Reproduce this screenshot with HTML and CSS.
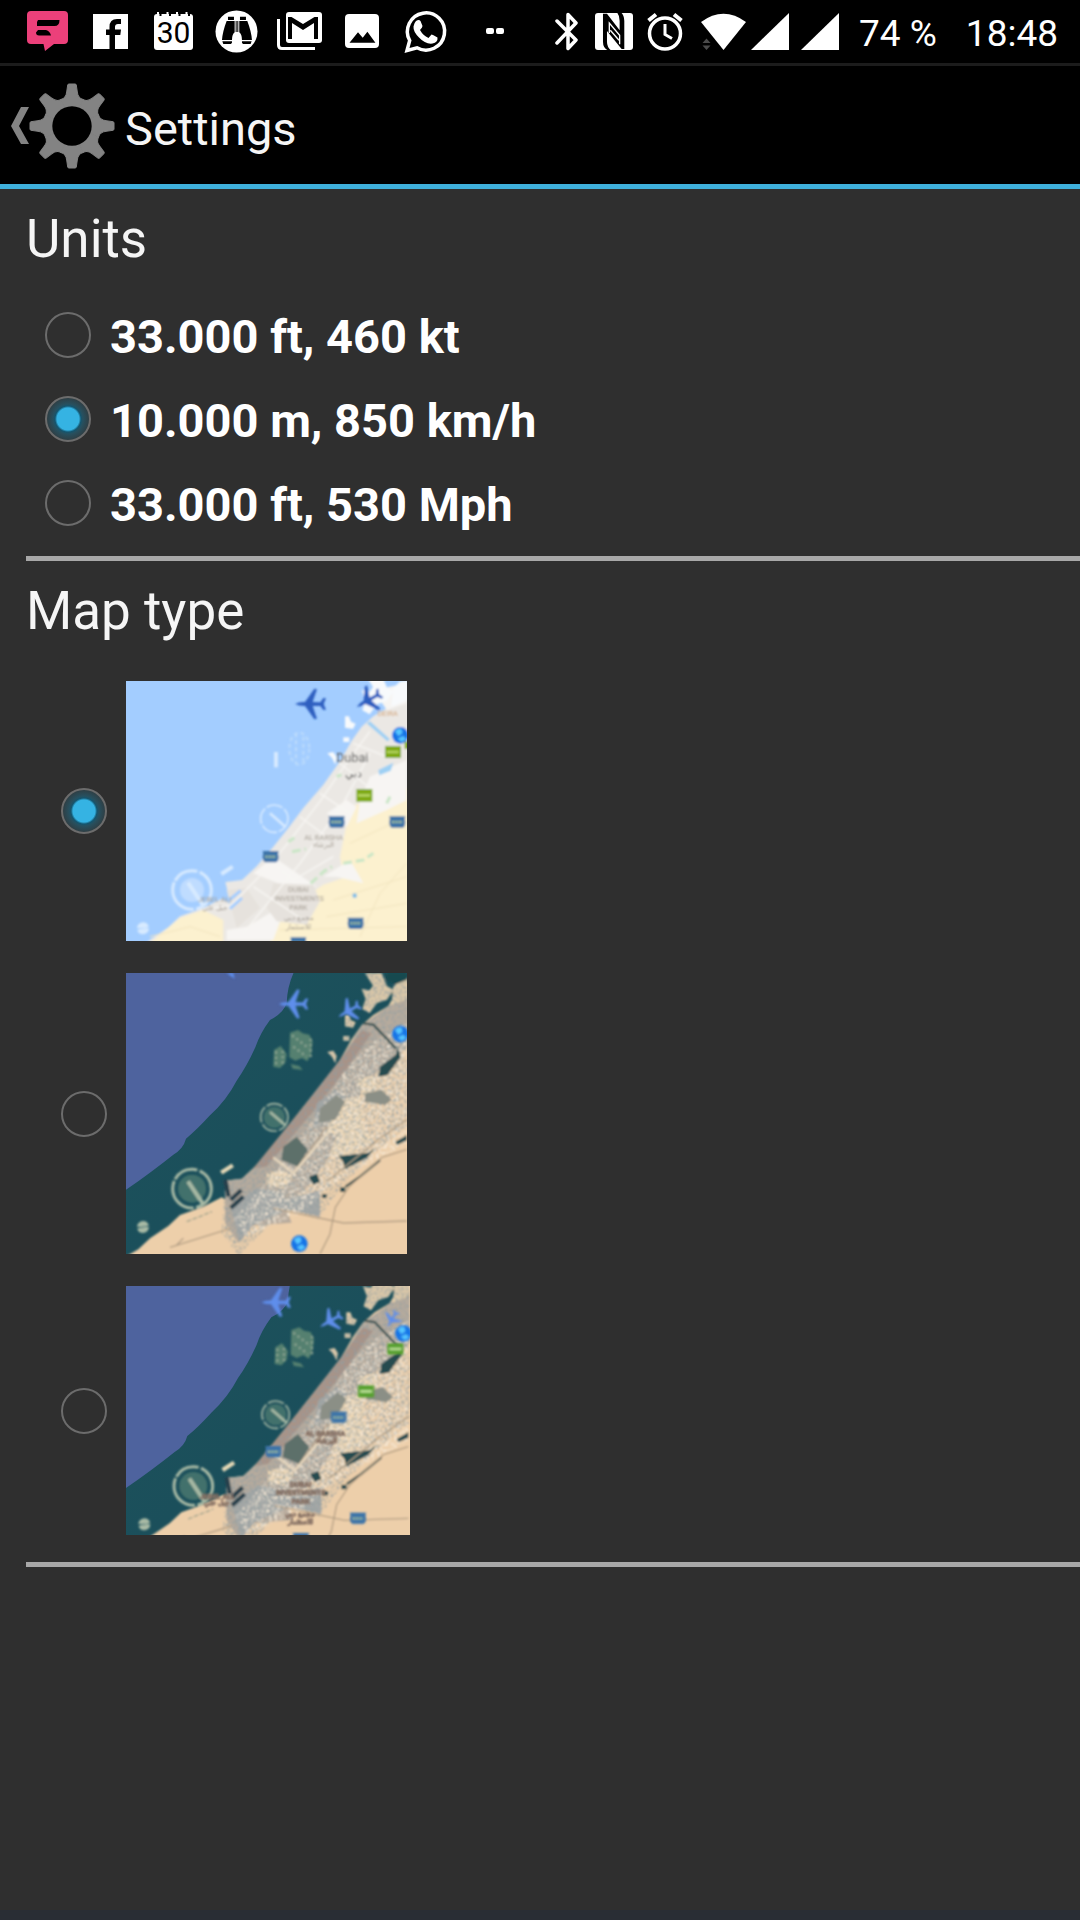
FILE: index.html
```html
<!DOCTYPE html>
<html lang="en">

<head>
  <meta charset="UTF-8">
  <meta name="viewport" content="width=device-width, initial-scale=1.0">
  <title>Settings</title>
  <link rel="stylesheet" href="styles.css">
</head>

<body>
  <div class="status-bar">
    <div class="notifications">
      <svg class="icon" width="48" height="48" viewBox="0 0 48 48">
        <path fill="#ec407a" d="M7 3h33q4 0 4 4v25q0 4-4 4H30l-9 7-1.500-7H7q-4 0-4-4V7q0-4 4-4z" />
        <path d="M14 12h21.500q0 6-5 6H13v-4zM14 22h8q4 1 5 5.500H15q-3 0-3-3z" />
      </svg>
      <svg class="icon" width="48" height="48" viewBox="0 0 48 48">
        <path fill="#fff" d="M6 6h35v35H6z" />
        <path d="M22.500 41V27H19v-5.500h3.500V19q0-8 7.500-8h4v5h-3q-3 0-3 3v2.500h6l-.700 5.500H28v14z" />
      </svg>
      <svg class="icon" width="48" height="48" viewBox="0 0 48 48">
        <rect x="4" y="6" width="39" height="36" rx="3" fill="#fff" />
        <path stroke="#fff" stroke-width="2" d="M8 4v4M17.500 4v4M27 4v4M36.500 4v4" />
        <path stroke="#000" stroke-width="2" d="M10.500 4v4M20 4v4M29.500 4v4M39 4v4" />
        <text class="day" x="23.500" y="35" text-anchor="middle">30</text>
      </svg>
      <svg class="icon" width="48" height="48" viewBox="0 0 48 48">
        <circle cx="23.500" cy="23.500" r="21" fill="#fff" />
        <path transform="translate(-3 -3) scale(.333)" d="M54 35h18v10H54zM90 35h18v10H90zM50 48h24v34q-8 6-8 23H36q2-26 14-57zM88 48h24q12 31 14 57H96q0-17-8-23zM37 109h29v4l-3 4H40zM96 109h29l-3 8H99l-3-4zM77 48h3v33h-3zM82 48h3v33h-3z" />
      </svg>
      <svg class="icon" width="48" height="48" viewBox="0 0 48 48">
        <path fill="none" stroke="#fff" stroke-width="3" d="M2.500 11v26q0 3.500 3.500 3.500h33" />
        <rect x="10" y="4" width="36" height="31" rx="3" fill="#fff" />
        <path d="M12 31V9h3.500L27 16l11.500-7H42v22h-4V15L27 22l-11-7v16z" />
      </svg>
      <svg class="icon" width="48" height="48" viewBox="0 0 48 48">
        <rect x="6" y="6" width="34" height="34" rx="4" fill="#fff" />
        <path d="M10.500 34.700L19 24.300l4.700 5.400 4.700-6 8 11z" />
      </svg>
      <svg class="icon" width="48" height="48" viewBox="0 0 48 48">
        <path fill="none" stroke="#fff" stroke-width="3.500" d="M5 42.500l2.700-10A18.600 18.600 0 1 1 15 39.800z" />
        <path fill="#fff" d="M14 13q3-2 4.500 0l2 5q0 1.500-2.500 4 3 5.500 8.500 8l3-3.500q1 0 6 3 .5 5-5 6-7 1-13.500-6-6-6-5.500-11 .5-3.500 2.500-5.500z" />
      </svg>
      <svg class="icon" width="48" height="48" viewBox="0 0 48 48">
        <path fill="#fff" d="M23 20h4q2 0 2 2v2q0 2-2 2h-4q-2 0-2-2v-2q0-2 2-2zM33 20h4q2 0 2 2v2q0 2-2 2h-4q-2 0-2-2v-2q0-2 2-2z" />
      </svg>
    </div>
    <div class="system">
      <svg class="icon" width="40" height="48" viewBox="0 0 40 48">
        <path fill="none" stroke="#fff" stroke-width="3.500" stroke-linejoin="round" stroke-linecap="round" d="M2 13l19 19-8 8.500V6.500l8 8.500L2 35" />
      </svg>
      <svg class="icon" width="52" height="48" viewBox="0 0 52 48">
        <rect y="5" width="38" height="37" rx="3" fill="#fff" />
        <g transform="translate(-4 -3) scale(.333)">
          <path d="M36 26h12l38 50V48q0-16-8-26h12q10 10 10 26v84h-8L48 78v32q0 16 12 26H50q-14-8-14-26z" />
          <path fill="none" stroke="#fff" stroke-width="4" d="M55 84V54l31 37v27" />
          <path stroke="#fff" stroke-width="4" d="M58 76l26 30" />
        </g>
      </svg>
      <svg class="icon" width="54" height="48" viewBox="0 0 54 48">
        <g fill="none" stroke="#fff">
          <circle cx="18" cy="25.500" r="15.500" stroke-width="3.500" />
          <path stroke-width="3" d="M18 16v10.500l7 4" />
          <path stroke-width="4" d="M1.500 12.500L9 6.500M27 6.500l7.500 6" />
        </g>
      </svg>
      <svg class="icon" width="50" height="48" viewBox="0 0 50 48">
        <path fill="#fff" d="M0 14Q22.500-2.500 45 14L22.500 42z" />
        <path fill="#4a4a4a" d="M1.500 35l4-4.500 4 4.500zM1.500 37.500h8l-4 4.500z" />
      </svg>
      <svg class="icon" width="50" height="48" viewBox="0 0 50 48">
        <path fill="#fff" d="M38 5v37H0z" />
      </svg>
      <svg class="icon" width="50" height="48" viewBox="0 0 50 48">
        <path fill="#fff" d="M38 5v37H0z" />
      </svg>
      <span class="battery">74 %</span>
      <span class="clock">18:48</span>
    </div>
  </div>

  <header class="action-bar">
    <a class="back" href="#" aria-label="Back">
      <svg width="18" height="38" viewBox="0 0 18 38">
        <path fill="#838383" d="M10 0h8L8 19l10 18h-8L0 19z" />
      </svg>
      <svg width="86" height="86" viewBox="-43 -43 86 86">
        <defs>
          <path id="tooth" d="M0 0L-11-26.500Q-6-28-5.300-34L-4.300-41q.2-1 1.300-1h6q1.100 0 1.300 1L5.300-34Q6-28 11-26.500z" />
        </defs>
        <g fill="#838383" stroke="#838383">
          <use href="#tooth" />
          <use href="#tooth" transform="rotate(45)" />
          <use href="#tooth" transform="rotate(90)" />
          <use href="#tooth" transform="rotate(135)" />
          <use href="#tooth" transform="rotate(180)" />
          <use href="#tooth" transform="rotate(225)" />
          <use href="#tooth" transform="rotate(270)" />
          <use href="#tooth" transform="rotate(315)" />
        </g>
        <circle r="19.700" />
      </svg>
    </a>
    <h1>Settings</h1>
  </header>

  <main class="settings">
    <section class="section">
      <h2>Units</h2>
      <div class="units">
        <label class="option"><input type="radio" name="units"><span>33.000 ft, 460 kt</span></label>
        <label class="option"><input type="radio" name="units" checked><span>10.000 m, 850 km/h</span></label>
        <label class="option"><input type="radio" name="units"><span>33.000 ft, 530 Mph</span></label>
      </div>
    </section>

    <section class="section">
      <h2>Map type</h2>
      <div class="maps">
        <label class="map-option">
          <input type="radio" name="map" aria-label="Normal" checked>
          <!-- road map -->
          <svg width="281" height="260" viewBox="258 33 843 780">
            <defs>
              <filter id="soft" x="-5%" y="-5%" width="110%" height="110%">
                <feGaussianBlur stdDeviation="2.500" />
              </filter>
              <path id="coast" d="M240 900L295 868 330 835 385 798 420 765 490 740 545 712 572 728 556 662 606 656 650 615 700 556 745 500 790 440 850 370 900 300 935 238 965 196 1000 165 1045 138 1075 85 1120 60V900z" />
              <path id="islands" d="M975 39h50l16 40 20 10-20 30-30 10-22 30-22-12 10-30-12-30 24 4 10-14zM915 165l12 0 6 16 14 6-8 16-24-4zM910 228h18v14h-18zM862 276l18-4 10 16-4 22-10-20zM1060 80l20-20 24-4v60l-50 20z" />
              <g id="palms">
                <circle cx="456" cy="686" r="58" fill="none" stroke-width="9" stroke-dasharray="78 7 120 5" />
                <path fill="none" stroke-width="12" d="M444 664l44 66M544 638l34-22" />
                <circle cx="703" cy="472" r="41" fill="none" stroke-width="5" stroke-dasharray="50 6" />
                <path fill="none" stroke-width="8" d="M690 456l46 40" />
                <circle cx="309" cy="801" r="10" fill="none" stroke-width="16" stroke-dasharray="28 3" />
              </g>
              <path id="plane" d="M-46 0q12-7 30-6L12-46 20-44 7-6 30-5 39-18 47-17 40 0 47 17 39 18 30 6 7 6 20 44 12 46-16 6Q-34 6-46 0z" />
              <g id="globe">
                <circle r="25" fill="#1874e6" />
                <path fill="#55c6ff" d="M-16-12q10-12 20-6l2 12-12 8zM-8 10L8 2l10 10-14 8z" />
              </g>
              <g id="shield">
                <path fill="#3d73a8" d="M-24-17h48q-3 8 0 16 0 16-8 18h-32q-8-2-8-18 3-8 0-16z" />
                <path stroke="#a8c69c" stroke-width="6" stroke-dasharray="7 3" d="M-16 0h32" />
              </g>
            </defs>
            <rect x="258" y="33" width="843" height="780" fill="#a3cdff" />
            <g filter="url(#soft)">
              <use href="#coast" y="-26" fill="#ebe8e4" />
              <path fill="#fcf1cf" d="M330 820l90-76 70-24 60 30v70zM900 560l30-150 60-20 125-40v480H690l10-76 60-50 90-60 60-20z" />
              <path fill="#f7f5f3" d="M640 610l60-50 130 90-90 0zM560 780l60-10 120-70-40 110H560zM990 320l110-50v120l-60 30-90 40 10-70zM850 620l80-50 40 70-80-20zM1000 60l100-20v60l-60 20zM860 430l60-40 30 20-30 60z" />
              <path fill="#e6e2dd" d="M700 640l120 4 20 50-40 70-90-10-30-40zM560 660l60-6 40 60-70 60z" />
              <g fill="none" stroke="#f8f6f3" stroke-width="4">
                <path d="M480 718l90-10 80-80 90-104 100-130 90-130 60-80M610 790L780 580 910 400l80-150M690 570l70 60 120-70M640 650l150 100M780 440l80 60M840 370l90 60M900 280l120 100M940 220l100 40" />
              </g>
              <path fill="none" stroke="#f2e5c0" stroke-width="3" d="M880 690l220-70M860 740l240-40M930 520l170-80M960 800l60-130 80-90M330 800l120-30 90 30M720 780l380-10" />
              <path fill="none" stroke="#c9e6c6" stroke-width="9" stroke-dasharray="26 12" d="M745 515l18-12M756 545l42-8M812 640l40-36 24-14M910 580l60-10 30-20M890 320l14-6M1040 400l10-20" />
              <use href="#islands" y="-26" fill="#f8fafc" />
              <path fill="#9ed0f4" d="M1015 300l45-22-8 24-34 14zM980 160l10-6 60 54-8 6z" />
              <circle cx="456" cy="660" r="36" fill="#bfdcff" />
              <use href="#palms" y="-26" stroke="#d7eaff" />
              <g fill="none" stroke="#bcdbfc" stroke-width="6" stroke-dasharray="12 9">
                <ellipse cx="778" cy="236" rx="30" ry="48" />
                <path d="M768 190v90M790 200v80" />
              </g>
              <path stroke="#d7eaff" stroke-width="12" d="M708 246v46" />
              <path stroke="#a3cdff" stroke-width="9" d="M568 690l34-28M570 716l36-32" />
              <g fill="#2e5fc0">
                <use href="#plane" transform="translate(811 102)" />
                <use href="#plane" transform="translate(986 90) rotate(-30) scale(.9)" />
              </g>
              <use href="#globe" x="1081" y="196" />
              <path fill="#7faa12" d="M1035 228h48v36h-48zM949 357h48v38h-48zM1094 215h12v22h-12z" />
              <path stroke="#c9e678" stroke-width="5" d="M1040 246h36M954 376h36" />
              <use href="#shield" x="890" y="456" />
              <use href="#shield" x="1072" y="456" />
              <use href="#shield" x="692" y="560" />
              <use href="#shield" x="947" y="760" />
              <use href="#shield" x="775" y="819" />
              <circle cx="944" cy="677" r="7" fill="#82bfe8" />
              <text class="city" x="888" y="277">Dubai</text>
              <text class="city-ar" x="914" y="320">دبي</text>
              <g class="place" text-anchor="middle">
                <text x="1043" y="137" fill="#d2a374">DEIRA</text>
                <text x="851" y="510">AL BARSHA</text>
                <text x="851" y="532">البرشاء</text>
                <text x="775" y="665">DUBAI</text>
                <text x="778" y="693">INVESTMENTS</text>
                <text x="775" y="721">PARK</text>
                <text x="778" y="750">مجمع دبي</text>
                <text x="776" y="777">للاستثمار</text>
                <text x="524" y="695">JEBEL ALI</text>
                <text x="524" y="719">جبل علي</text>
              </g>
            </g>
          </svg>
        </label>

        <label class="map-option">
          <input type="radio" name="map" aria-label="Satellite">
          <!-- satellite -->
          <svg width="281" height="281" viewBox="258 39 843 843">
            <defs>
              <linearGradient id="sea" x1="0" y1="0" x2="1" y2="1">
                <stop offset="0" stop-color="#1d535b" />
                <stop offset=".5" stop-color="#1b4f5b" />
                <stop offset="1" stop-color="#104e5c" />
              </linearGradient>
              <!-- dark speckles for the built-up area -->
              <filter id="speckle" x="0" y="0" width="100%" height="100%">
                <feTurbulence type="fractalNoise" baseFrequency=".16" numOctaves="3" seed="8" />
                <feColorMatrix values="0 0 0 0 .28  0 0 0 0 .34  0 0 0 0 .35  4 0 0 0 -1.900" />
                <feComposite in2="SourceGraphic" operator="in" />
              </filter>
              <filter id="sand" x="0" y="0" width="100%" height="100%">
                <feTurbulence type="fractalNoise" baseFrequency=".12" numOctaves="3" seed="3" />
                <feColorMatrix values="0 0 0 0 .93  0 0 0 0 .82  0 0 0 0 .68  4 0 0 0 -1.800" />
                <feComposite in2="SourceGraphic" operator="in" />
              </filter>
              <g id="satellite">
                <rect x="240" y="20" width="900" height="900" fill="url(#sea)" />
                <path fill="#4e639e" d="M240 20h530Q742 70 740 130 730 160 690 180 660 220 646 262 620 320 590 362 560 420 510 466 470 510 438 536 430 566 400 584 330 640 240 702z" />
                <g filter="url(#soft)">
                  <use href="#coast" fill="#edcfaa" />
                  <path fill="#b8ab9d" d="M556 662l50-6 44-41 50-59 90-116 110-140 65-104 80-58 60-40v160l-60 50-70 60-40 90-50 110-80 110-70 60 20 50-130 10-30 50-40-60z" />
                  <path fill="#aa9285" d="M640 625L790 440l110-140 65-90 30 10-70 100-110 140-135 160z" />
                  <path fill="#a5a7a6" d="M570 735l80-50 70 10 30 50-110 50-40 50zM830 430l60-40 30 30-40 60-60 20zM730 720l110-30 0 80-110-25z" />
                  <path fill="#efd7b4" d="M950 360l50-14 14 36-44 26zM890 530l60-60 50 70-90 50-40-10zM680 640l50-10 30 20-30 34-50-10zM890 420l70-10 10 60-50 60-60-10z" />
                  <path fill="#edcfaa" d="M850 700l90-70 60-80 110-50v400H840z" />
                  <path filter="url(#sand)" d="M700 640l120-160 90-140 80-90 110-60v360L900 660l-120 100-160 70-40-50z" />
                  <path filter="url(#speckle)" d="M556 662l50-6 44-41 50-59 90-116 110-140 65-104 80-58 60-40v400l-90 70-110 110-70 100-100-30-80 80-60 60-50-70z" />
                  <path fill="#5d6f6a" d="M730 560l40-30 34 40-30 50-50-20z" />
                  <path fill="#8b8f86" d="M975 400l50-10 30 30-20 14-60-8zM840 445l50-40 26 20-30 54-50 10z" />
                  <path fill="#254c50" d="M1020 320l46-34 8-24 8 30-40 54-26 4zM896 588l90-10 20-14-26 30-66 34-4-22zM806 650l26-8 8 24-20 8zM1066 545l35-20v16l-30 14zM900 682h16v14h-16zM846 702h14v12h-14z" />
                  <path fill="none" stroke="#344f50" stroke-width="7" d="M970 190l30 4 34 36 34 36M1050 90l20 24 34 0M1020 600l-60 50-44 30" />
                  <path fill="none" stroke="#b39e84" stroke-width="4" d="M1101 478l-80 56-160 130M840 882l30-60 16-80 40-60 100-90 75-24M700 745l210 44 191-6M390 862l180-56M430 835l-20 20M860 500L760 640" />
                  <path fill="none" stroke="#e8d8be" stroke-width="7" d="M700 592l60 48 110-130" />
                  <path stroke="#9ca28d" stroke-width="4" stroke-dasharray="14 5" d="M440 785l76-30" />
                  <path fill="none" stroke="#253f4c" stroke-width="13" d="M572 720l32-30M572 744l38-34M556 660l10 50" />
                  <use href="#islands" fill="#dfcaa9" />
                  <use href="#islands" filter="url(#speckle)" />
                  <path fill="#13494f" d="M1040 39h61v20l-34 14-30-14z" />
                  <g fill="#42716c">
                    <circle cx="456" cy="686" r="42" />
                    <circle cx="703" cy="472" r="32" />
                  </g>
                  <use href="#palms" stroke="#a7b9a4" />
                  <path stroke="#e5d8b6" stroke-width="12" d="M544 638l34-22" />
                  <path fill="#54806f" d="M750 218l24-8 14 10 20 4 10 20-4 36-12 24-16-10-20 8-18-10zM702 270l20-12 18 24-4 26-16 16-20-4zM752 312l26 6 10 12-30-4z" />
                  <path fill="none" stroke="#8aa391" stroke-width="7" stroke-dasharray="7 9" d="M756 226l52 40M760 260l40 30M812 236v60M708 274v44M728 272v40" />
                </g>
              </g>
            </defs>
            <use href="#satellite" />
            <g filter="url(#soft)">
              <g fill="#5e8eeb">
                <use href="#plane" transform="translate(760 132) scale(.95)" />
                <use href="#plane" transform="translate(927 152) rotate(-30) scale(.8)" />
                <path d="M560 39h20l4 18z" />
              </g>
              <use href="#globe" x="1081" y="222" />
              <use href="#globe" x="778" y="851" />
            </g>
          </svg>
        </label>

        <label class="map-option">
          <input type="radio" name="map" aria-label="Hybrid">
          <!-- satellite with labels -->
          <svg width="284" height="249" viewBox="258 48 852 747">
            <use href="#satellite" x="4" y="-38" />
            <g filter="url(#soft)">
              <g fill="#5e8eeb">
                <use href="#plane" transform="translate(708 97) scale(.95)" />
                <use href="#plane" transform="translate(872 152) rotate(-30) scale(.8)" />
                <use href="#plane" transform="translate(1056 148) rotate(-60) scale(.6)" />
              </g>
              <use href="#globe" x="1090" y="190" />
              <path fill="#56a02d" d="M1042 220h48v34h-48zM954 346h48v36h-48z" />
              <path stroke="#c5e6a2" stroke-width="7" d="M1048 237h36M960 364h36" />
              <use href="#shield" x="896" y="442" />
              <use href="#shield" x="700" y="545" />
              <use href="#shield" x="954" y="745" />
              <use href="#shield" x="782" y="806" />
              <g class="place dark" text-anchor="middle">
                <text x="856" y="498">AL BARSHA</text>
                <text x="860" y="520">البرشاء</text>
                <text x="782" y="650">DUBAI</text>
                <text x="782" y="676">INVESTMENTS</text>
                <text x="782" y="702">PARK</text>
                <text x="780" y="738">مجمع دبي</text>
                <text x="780" y="762">للاستثمار</text>
                <text x="530" y="686">JEBEL ALI</text>
                <text x="530" y="706">جبل علي</text>
              </g>
            </g>
          </svg>
        </label>
      </div>
    </section>
  </main>

  <footer class="bottom-edge"></footer>
</body>

</html>
```
FILE: styles.css
```css
* {
  margin: 0;
  padding: 0;
  box-sizing: border-box;
}

body {
  min-height: 100vh;
  display: flex;
  flex-direction: column;
  background-color: #2f2f2f;
  color: #f5f5f5;
  font-family: Roboto, sans-serif;
}

svg {
  display: block;
  flex-shrink: 0;
}

.status-bar {
  height: 66px;
  padding: 0 22px 0 24px;
  display: flex;
  justify-content: space-between;
  align-items: center;
  background-color: #000000;
  border-bottom: 3px solid #1c1c1c;
}

.notifications {
  display: flex;
  gap: 15px;
}

.system {
  display: flex;
  align-items: center;
  font-size: 37px;
  color: #ffffff;
  white-space: nowrap;
}

.system span {
  padding-top: 3px;
}

.day {
  font-size: 30px;
}

.battery {
  margin-left: 8px;
}

.clock {
  margin-left: 29px;
}

.action-bar {
  height: 123px;
  padding: 2px 11px 0;
  display: flex;
  align-items: center;
  gap: 10px;
  background-color: #000000;
  border-bottom: 5px solid #3fb0db;
}

.back {
  display: flex;
  align-items: center;
}

h1 {
  padding-top: 4px;
  font-size: 47px;
  font-weight: normal;
}

.settings {
  flex: 1;
  padding-left: 26px;
}

.section {
  border-bottom: 5px solid #a8a8a8;
}

h2 {
  padding-top: 2px;
  font-size: 53px;
  line-height: 96px;
  font-weight: normal;
}

.units {
  padding: 6px 0 11px 19px;
}

.option {
  height: 84px;
  display: flex;
  align-items: center;
  gap: 19px;
  color: #ffffff;
  font-size: 47px;
  font-weight: bold;
}

.option span {
  padding-top: 3px;
}

input[type="radio"] {
  appearance: none;
  flex-shrink: 0;
  width: 46px;
  height: 46px;
  border: 2px solid #6c6c6c;
  border-radius: 50%;
}

input[type="radio"]:checked {
  background: radial-gradient(circle, #35b3e3 0 11px, #14556e 13px, #27505f 15px, #2f3f45 21px);
}

.maps {
  padding: 22px 0 27px 35px;
  display: flex;
  flex-direction: column;
  gap: 32px;
}

.map-option {
  display: flex;
  align-items: center;
  gap: 19px;
}

.city {
  font-size: 38px;
  fill: #555555;
}

.city-ar {
  font-size: 34px;
  fill: #555555;
}

.place {
  font-size: 22px;
  fill: #a39c92;
}

.dark {
  font-weight: bold;
  fill: #5f4f49;
  stroke: #8a7467;
  stroke-width: 2px;
}

.bottom-edge {
  height: 10px;
  background-color: #292d34;
}
```
